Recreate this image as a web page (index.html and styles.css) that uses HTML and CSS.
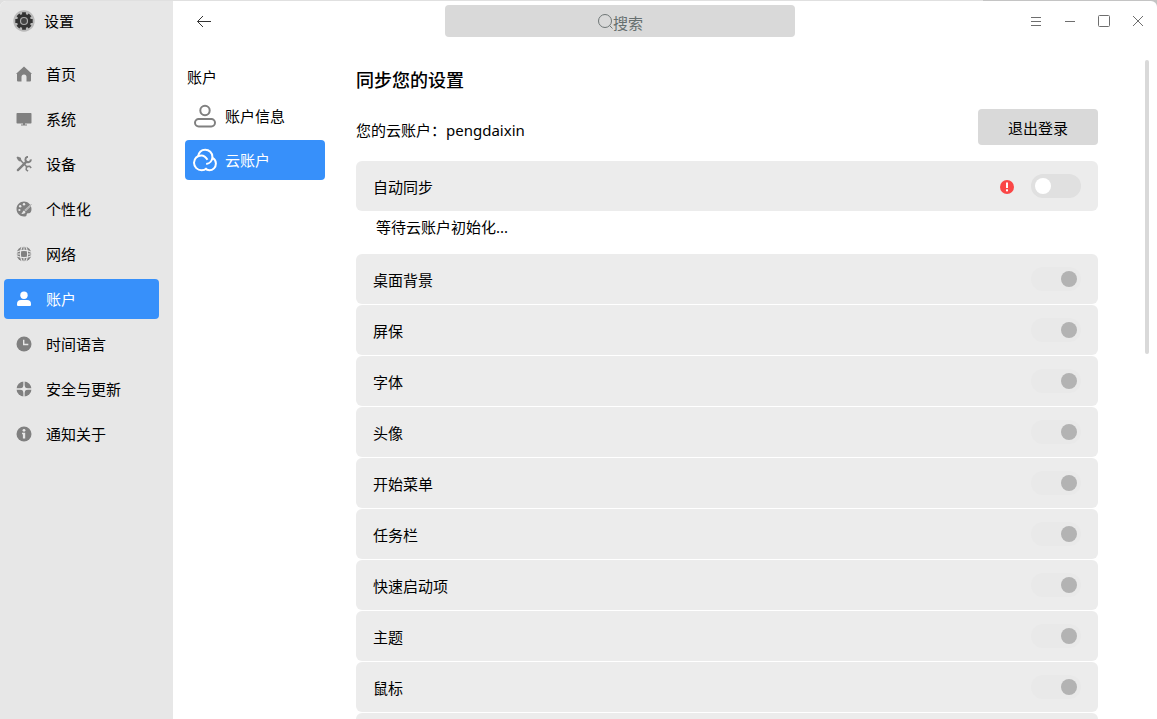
FILE: index.html
```html
<!DOCTYPE html>
<html lang="zh-CN">
<head>
<meta charset="utf-8">
<title>设置</title>
<link rel="stylesheet" href="styles.css">
</head>
<body>
<div class="window">
  <aside class="sidebar">
    <div class="brand">
      <svg class="brand-icon" viewBox="0 0 22 22">
        <circle cx="11" cy="11" r="10.7" fill="#b9b9b9"/>
        <circle cx="11" cy="11" r="7" fill="#333"/>
        <g stroke="#333" stroke-width="3.800"><path d="M11 2.300v17.400M2.300 11h17.400M4.900 4.900l12.200 12.200M17.100 4.900L4.900 17.100"/></g>
        <circle cx="11" cy="11" r="3.500" fill="#444" stroke="#a9a9a9" stroke-width="1.200"/>
      </svg>
      <span>设置</span>
    </div>
    <nav class="menu">
      <a class="menu-item" href="#home"><svg class="icon" viewBox="0 0 16 16"><path d="M8 .6l7.600 6.800q.3.600-.3.600H15v6.500a1 1 0 0 1-1 1h-3.500V11a2.500 2.500 0 0 0-5 0v4.500H2a1 1 0 0 1-1-1V8H.7q-.6 0-.3-.6z"/></svg>首页</a>
      <a class="menu-item" href="#system"><svg class="icon" viewBox="0 0 16 16"><path d="M1.200 2h13.600a.7.7 0 0 1 .7.7v9a.7.7 0 0 1-.7.7H9v1.200h2v1H5v-1h2v-1.200H1.200a.7.7 0 0 1-.7-.7v-9a.7.7 0 0 1 .7-.7z"/></svg>系统</a>
      <a class="menu-item" href="#devices"><svg class="icon" viewBox="0 0 16 16"><g fill="none" stroke="currentColor"><path d="M3 2.800l8.500 8.700" stroke-width="1.500"/><path d="M10.500 10.500l-.3 3.200 1.800 1.500M10.500 10.500l3.200-.3 1.500 1.800" stroke-width="1.500"/><path d="M1.900 14.100l8.600-8.400" stroke-width="2.400" stroke-linecap="round"/><path d="M14.800 3.400a2.700 2.700 0 1 1-2.800-2.600" stroke-width="1.900"/></g><path d="M.5 1.400L1.600.4l3.200 1.400.7 3-1.700.7L2 4.200z"/></svg>设备</a>
      <a class="menu-item" href="#personal"><svg class="icon" viewBox="0 0 16 16"><path d="M8 .5C3.900.5.500 3.800.500 8S3.900 15.500 8 15.500c1.500 0 2.600-.5 2.600-1.600 0-1.400.8-1.900 2-1.700 1.700.3 2.900-1.700 2.900-4.200C15.500 3.800 12.100.5 8 .5z"/><g fill="#e7e7e7"><circle cx="4.200" cy="5.200" r="1.200"/><circle cx="8" cy="3.200" r="1.200"/><circle cx="3.400" cy="9" r="1.100"/><path d="M14.400 3.400l1 1.200-5.700 5.700-1.300-1.200z"/><path d="M8 9.500l1.500 1.400c-.4 1.700-2.200 2.200-4.400 1.900C6.800 12 6.600 10 8 9.500z"/></g><path d="M15.300 3.300L8.800 9.800" stroke="currentColor" stroke-width=".8"/></svg>个性化</a>
      <a class="menu-item" href="#network"><svg class="icon" viewBox="0 0 16 16"><circle cx="8" cy="8" r="7.500"/><g fill="none" stroke="#e7e7e7"><path d="M8 0v5M8 11v5M0 8h5M11 8h5" stroke-width="1"/><ellipse cx="8" cy="8" rx="3.600" ry="8.200" stroke-width="1.100"/><ellipse cx="8" cy="8" rx="8.200" ry="3.600" stroke-width="1.100"/></g></svg>网络</a>
      <a class="menu-item active" href="#account" aria-current="page"><svg class="icon" viewBox="0 0 16 16"><circle cx="8" cy="4.200" r="3.700"/><path d="M5 9h6a4 4 0 0 1 4 4v.900A1.100 1.100 0 0 1 13.900 15H2.100A1.100 1.100 0 0 1 1 13.900V13a4 4 0 0 1 4-4z"/></svg>账户</a>
      <a class="menu-item" href="#time"><svg class="icon" viewBox="0 0 16 16"><circle cx="8" cy="8" r="7.500"/><path d="M7.700 3.800v4.700h4.600" fill="none" stroke="#e7e7e7" stroke-width="1.400"/></svg>时间语言</a>
      <a class="menu-item" href="#security"><svg class="icon" viewBox="0 0 16 16"><circle cx="8" cy="8" r="7.500"/><path d="M8 0v16M0 8h16" stroke="#e7e7e7" stroke-width="1.300"/><path d="M8 4l1.400 2.600L12 8 9.400 9.400 8 12 6.600 9.400 4 8l2.600-1.400z" fill="#e7e7e7"/></svg>安全与更新</a>
      <a class="menu-item" href="#about"><svg class="icon" viewBox="0 0 16 16"><circle cx="8" cy="8" r="7.500"/><g fill="#e7e7e7"><circle cx="8" cy="4.300" r="1.400"/><path d="M6 6.800h3.200v5.700H6.900V8.200H6z"/></g></svg>通知关于</a>
    </nav>
  </aside>

  <main class="main">
    <header class="titlebar">
      <button class="tool" type="button"><svg viewBox="0 0 16 16"><path d="M15 8.500H1.500M7 3L1.500 8.500 7 14" stroke="#333"/></svg></button>
      <label class="search">
        <svg viewBox="0 0 16 16"><circle cx="8" cy="8" r="6.500"/><path d="M12.500 12.500l3 3"/></svg>
        <input type="text" placeholder="搜索">
      </label>
      <div class="controls">
        <button class="tool" type="button"><svg viewBox="0 0 16 16"><path d="M3 4.500h10M3 8.500h10M3 12.500h10"/></svg></button>
        <button class="tool" type="button"><svg viewBox="0 0 16 16"><path d="M3 8.500h10"/></svg></button>
        <button class="tool" type="button"><svg viewBox="0 0 16 16"><rect x="2.500" y="2.500" width="11" height="11" rx="1"/></svg></button>
        <button class="tool" type="button"><svg viewBox="0 0 16 16"><path d="M3 3l10 10M13 3L3 13"/></svg></button>
      </div>
    </header>

    <div class="body">
      <nav class="subnav">
        <h2 class="subnav-title">账户</h2>
        <a class="subnav-item" href="#info"><svg viewBox="0 0 24 24"><circle cx="12" cy="6.500" r="4.700"/><rect x="2" y="15" width="20" height="7.500" rx="3.700"/></svg>账户信息</a>
        <a class="subnav-item active" href="#cloud" aria-current="page"><svg viewBox="0 0 24 24"><path d="M5.100 8.400C5.800 4.300 8.700 1.700 12.200 1.700c4 0 7.200 3.100 7.200 7.200 0 3.600-2.700 6.500-6.200 7.100"/><path d="M13.800 20.200c-1.500 1.300-3.200 2.100-5.200 2.100A7.600 7.600 0 0 1 1 14.800c0-4.200 3.300-7.400 7.400-7.400 3.100 0 4.600 1.800 6.100 4.300"/><path d="M19.600 9.900c2.100 1.100 3.300 3.200 3.300 5.600 0 3.800-2.900 6.800-6.500 6.800-1.800 0-3.100-.6-4.300-1.700"/></svg>云账户</a>
      </nav>

      <section class="content">
        <h1 class="page-title">同步您的设置</h1>
        <div class="account">
          <span class="account-name">您的云账户：pengdaixin</span>
          <button class="logout" type="button">退出登录</button>
        </div>
        <div class="row">
          <label for="auto">自动同步</label>
          <svg class="alert" viewBox="0 0 14 15"><circle cx="7" cy="8" r="7" fill="#fa4747"/><rect x="6" y="3.500" width="2" height="5.500" fill="#fff"/><rect x="6" y="10.300" width="2" height="2" fill="#fff"/></svg>
          <input class="switch" type="checkbox" id="auto">
        </div>
        <p class="status">等待云账户初始化...</p>
        <div class="list">
          <div class="row"><label for="s1">桌面背景</label><input class="switch" type="checkbox" id="s1" checked disabled></div>
          <div class="row"><label for="s2">屏保</label><input class="switch" type="checkbox" id="s2" checked disabled></div>
          <div class="row"><label for="s3">字体</label><input class="switch" type="checkbox" id="s3" checked disabled></div>
          <div class="row"><label for="s4">头像</label><input class="switch" type="checkbox" id="s4" checked disabled></div>
          <div class="row"><label for="s5">开始菜单</label><input class="switch" type="checkbox" id="s5" checked disabled></div>
          <div class="row"><label for="s6">任务栏</label><input class="switch" type="checkbox" id="s6" checked disabled></div>
          <div class="row"><label for="s7">快速启动项</label><input class="switch" type="checkbox" id="s7" checked disabled></div>
          <div class="row"><label for="s8">主题</label><input class="switch" type="checkbox" id="s8" checked disabled></div>
          <div class="row"><label for="s9">鼠标</label><input class="switch" type="checkbox" id="s9" checked disabled></div>
          <div class="row"></div>
        </div>
      </section>
    </div>
    <div class="scroll-thumb"></div>
  </main>
</div>
</body>
</html>
```

FILE: styles.css
```css
* {
  box-sizing: border-box;
}

body {
  margin: 0;
  height: 100vh;
  padding-top: 1px;
  overflow: hidden;
  background: linear-gradient(90deg, #e0e0e0 85%, #c4c4c4 85%);
  color: #000;
  font: 15px/24px "Noto Sans", "Noto Sans CJK SC", sans-serif;
}

a {
  color: inherit;
  text-decoration: none;
}

button,
input {
  margin: 0;
  padding: 0;
  border: 0;
  font: inherit;
  color: inherit;
}

.window {
  display: flex;
  height: 100%;
  overflow: hidden;
  border-radius: 6px;
  border-bottom-left-radius: 0;
  border-bottom-right-radius: 0;
  background: #fff;
}

/* Sidebar */
.sidebar {
  flex: 0 0 173px;
  background: #e7e7e7;
}

.brand {
  display: flex;
  align-items: center;
  gap: 9px;
  height: 40px;
  padding-left: 13px;
}

.brand-icon {
  width: 22px;
  height: 22px;
}

.menu {
  display: flex;
  flex-direction: column;
  gap: 5px;
  padding: 13px 14px 0 4px;
}

.menu-item {
  display: flex;
  align-items: center;
  gap: 14px;
  height: 40px;
  padding-left: 12px;
  border-radius: 4px;
}

.icon {
  width: 16px;
  height: 16px;
  color: #808080;
  fill: currentColor;
}

.active {
  background: #3790fa;
  color: #fff;
}

.active .icon {
  color: #fff;
}

/* Title bar */
.main {
  position: relative;
  flex: 1;
  display: flex;
  flex-direction: column;
  min-width: 0;
}

.titlebar {
  display: flex;
  align-items: center;
  justify-content: space-between;
  height: 40px;
  padding: 0 4px 0 16px;
}

.tool {
  display: grid;
  place-items: center;
  width: 30px;
  height: 30px;
  background: none;
}

.tool svg {
  width: 16px;
  height: 16px;
  fill: none;
  stroke: #6e6e6e;
}

.controls {
  display: flex;
  gap: 4px;
}

.search {
  display: flex;
  align-items: center;
  justify-content: center;
  width: 350px;
  height: 32px;
  border-radius: 4px;
  background: #d9d9d9;
}

.search svg {
  width: 16px;
  height: 16px;
  fill: none;
  stroke: #6f7676;
}

.search input {
  width: 30px;
  height: 28px;
  padding-top: 4px;
  background: none;
  outline: 0;
}

.search input::placeholder {
  color: #666f6f;
  opacity: 1;
}

/* Body */
.body {
  flex: 1;
  display: flex;
  min-height: 0;
  padding: 24px 59px 0 12px;
  gap: 31px;
  overflow: hidden;
}

.subnav {
  flex: 0 0 140px;
  display: flex;
  flex-direction: column;
  gap: 4px;
}

.subnav-title {
  margin: 0 0 3px 2px;
  font: inherit;
}

.subnav-item {
  display: flex;
  align-items: center;
  gap: 8px;
  height: 40px;
  padding-left: 8px;
  border-radius: 4px;
}

.subnav-item svg {
  width: 24px;
  height: 24px;
  fill: none;
  stroke: #808080;
  stroke-width: 2;
}

.subnav-item.active svg {
  stroke: #fff;
}

.content {
  flex: 1;
  min-width: 0;
}

.page-title {
  margin: 0;
  font-size: 18px;
  font-weight: 500;
  line-height: 30px;
}

.account {
  display: flex;
  align-items: center;
  justify-content: space-between;
  margin: 14px 0 16px;
}

.account-name {
  padding-top: 6px;
}

.logout {
  width: 120px;
  height: 36px;
  padding-top: 2px;
  border-radius: 4px;
  background: #d9d9d9;
}

.row {
  flex: none;
  display: flex;
  align-items: center;
  gap: 17px;
  height: 50px;
  padding: 0 17px;
  border-radius: 6px;
  background: #ececec;
}

.row label {
  flex: 1;
  padding-top: 2px;
}

.alert {
  width: 14px;
  height: 15px;
}

.status {
  margin: 4px 20px 15px;
}

.list {
  display: flex;
  flex-direction: column;
  gap: 1px;
}

.switch {
  appearance: none;
  display: flex;
  align-items: center;
  width: 50px;
  height: 24px;
  padding: 0 4px;
  border-radius: 12px;
  background: #e0e0e0;
}

.switch::before {
  content: "";
  width: 16px;
  height: 16px;
  border-radius: 50%;
  background: #fff;
}

.switch:checked {
  justify-content: flex-end;
}

.switch:disabled {
  background: #e9e9e9;
}

.switch:disabled::before {
  background: #b3b3b3;
}

.scroll-thumb {
  position: absolute;
  top: 59px;
  right: 8px;
  width: 4px;
  height: 294px;
  border-radius: 2px;
  background: #d9d9d9;
}
```
